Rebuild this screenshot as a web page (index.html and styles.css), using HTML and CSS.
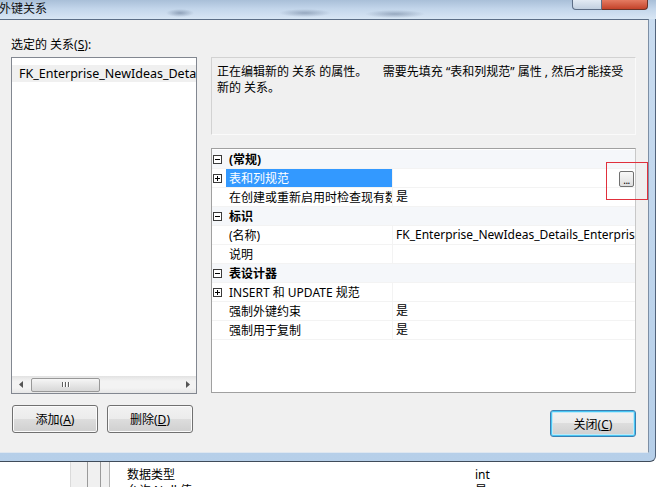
FILE: index.html
```html
<!DOCTYPE html>
<html lang="zh-CN">
<head>
<meta charset="utf-8">
<title>外键关系</title>
<link rel="stylesheet" href="styles.css">
</head>
<body>
<div class="screen">
  <div class="window">
    <div class="titlebar">
      <span class="title">外键关系</span>
      <div class="caption-btns">
        <div class="cap-restore"></div>
        <div class="cap-close"></div>
      </div>
    </div>
    <div class="frame">
      <div class="client">
        <div class="left">
          <div class="label">选定的 关系(<u>S</u>):</div>
          <div class="listbox">
            <div class="list-items">
              <div class="list-item">FK_Enterprise_NewIdeas_Details_Enterprise</div>
            </div>
            <div class="hscroll">
              <div class="arrow"><svg width="4" height="7" viewBox="0 0 4 7"><path d="M4 0 L0 3.5 L4 7 Z" fill="#555"/></svg></div>
              <div class="track">
                <div class="thumb"><span class="grip"></span><span class="grip"></span><span class="grip"></span></div>
              </div>
              <div class="arrow"><svg width="4" height="7" viewBox="0 0 4 7"><path d="M0 0 L4 3.5 L0 7 Z" fill="#555"/></svg></div>
            </div>
          </div>
          <div class="btnrow">
            <button class="btn">添加(<u>A</u>)</button>
            <button class="btn">删除(<u>D</u>)</button>
          </div>
        </div>
        <div class="right">
          <div class="desc"><div class="dline">正在编辑新的 关系 的属性。&nbsp;&nbsp;&nbsp;&nbsp; 需要先填充 “表和列规范” 属性 , 然后才能接受</div><div class="dline">新的 关系。</div></div>
          <div class="grid">
            <div class="row cat"><div class="margin"><span class="pm minus"></span></div><div class="name">(常规)</div></div>
            <div class="row"><div class="margin"><span class="pm plus"></span></div><div class="name selected">表和列规范</div><div class="value"><span class="ellipsis">...</span></div></div>
            <div class="row"><div class="margin"></div><div class="name">在创建或重新启用时检查现有数据</div><div class="value">是</div></div>
            <div class="row cat"><div class="margin"><span class="pm minus"></span></div><div class="name">标识</div></div>
            <div class="row"><div class="margin"></div><div class="name">(名称)</div><div class="value">FK_Enterprise_NewIdeas_Details_Enterprise</div></div>
            <div class="row"><div class="margin"></div><div class="name">说明</div><div class="value"></div></div>
            <div class="row cat"><div class="margin"><span class="pm minus"></span></div><div class="name">表设计器</div></div>
            <div class="row"><div class="margin"><span class="pm plus"></span></div><div class="name">INSERT 和 UPDATE 规范</div><div class="value"></div></div>
            <div class="row"><div class="margin"></div><div class="name">强制外键约束</div><div class="value">是</div></div>
            <div class="row"><div class="margin"></div><div class="name">强制用于复制</div><div class="value">是</div></div>
          </div>
          <div class="closerow">
            <button class="btn focused">关闭(<u>C</u>)</button>
          </div>
          <div class="redbox"></div>
        </div>
      </div>
    </div>
  </div>
  <div class="below">
    <div class="blank"></div>
    <div class="gutter"><span class="gline g1"></span><span class="gline g2"></span></div>
    <div class="bg-table">
      <div class="bg-row"><span class="bg-name">数据类型</span><span class="bg-val">int</span></div>
      <div class="bg-row"><span class="bg-name">允许 Null 值</span><span class="bg-val">是</span></div>
    </div>
  </div>
</div>
</body>
</html>
```
FILE: styles.css
```css
html, body {
  margin: 0;
  padding: 0;
}
body {
  font: 12px "Noto Sans", "Noto Sans CJK SC", sans-serif;
  color: #000;
  background: #fff;
}
.screen {
  width: 659px;
  height: 487px;
  overflow: hidden;
  background: #fff;
}
.window {
  width: 656px;
  display: flex;
  flex-direction: column;
}
.titlebar {
  height: 19px;
  display: flex;
  justify-content: space-between;
  align-items: flex-start;
  background:
    radial-gradient(ellipse 14px 4px at 180px 13px, rgba(70,90,120,0.45), transparent),
    radial-gradient(ellipse 26px 4px at 305px 13px, rgba(70,90,120,0.4), transparent),
    radial-gradient(ellipse 30px 4px at 395px 14px, rgba(70,90,120,0.4), transparent),
    linear-gradient(#a9bfd8, #c2d5ea 45%, #d8e6f4);
}
.title {
  margin-left: -1px;
  line-height: 18px;
  font-size: 12px;
  color: #111;
}
.caption-btns {
  display: flex;
  margin-right: 8px;
}
.cap-restore {
  width: 28px;
  height: 9px;
  border: 1px solid #5d6e86;
  border-top: none;
  border-radius: 0 0 0 4px;
  background: linear-gradient(#e3ebf4, #c2d0e0);
}
.cap-close {
  width: 45px;
  height: 9px;
  border: 1px solid #6a3328;
  border-top: none;
  border-left: none;
  border-radius: 0 0 4px 0;
  background: linear-gradient(#e47b62, #c4432a);
}
.frame {
  background: linear-gradient(#c9dcf0, #b6cfe9);
  padding: 0 6px 8px 0;
  border-right: 1px solid #52647c;
  border-bottom: 1px solid #3f4b5a;
  border-bottom-right-radius: 6px;
}
.client {
  width: 649px;
  height: 434px;
  box-sizing: border-box;
  background: #f0f0f0;
  border-top: 1px solid #5b6e86;
  border-right: 1px solid #7d8fa5;
  border-bottom: 1px solid #dfe7f0;
  display: flex;
  gap: 14px;
  padding: 16px 0 0 11px;
}
.left {
  width: 186px;
  display: flex;
  flex-direction: column;
}
.label {
  height: 15px;
  line-height: 17px;
  margin-bottom: 6px;
  white-space: nowrap;
}
.listbox {
  height: 337px;
  box-sizing: border-box;
  border: 1px solid #828790;
  background: #fff;
  display: flex;
  flex-direction: column;
}
.list-items {
  flex: 1;
  padding-top: 7px;
  overflow: hidden;
}
.list-item {
  height: 17px;
  line-height: 17px;
  background: #f0f0f0;
  padding-left: 7px;
  font-size: 12.5px;
  white-space: nowrap;
  overflow: hidden;
}
.hscroll {
  height: 17px;
  display: flex;
  align-items: stretch;
  background: linear-gradient(#e2e2e2, #f3f3f3 30%, #f3f3f3 70%, #e6e6e6);
}
.arrow {
  width: 17px;
  display: flex;
  align-items: center;
  justify-content: center;
}
.track {
  flex: 1;
  display: flex;
  align-items: center;
  padding-left: 2px;
}
.thumb {
  width: 69px;
  height: 14px;
  box-sizing: border-box;
  border: 1px solid #989898;
  border-radius: 2px;
  background: linear-gradient(#f6f6f6, #e6e6e6 50%, #d8d8d8);
  display: flex;
  align-items: center;
  justify-content: center;
  gap: 1px;
}
.grip {
  width: 1px;
  height: 5px;
  background: #5f5f5f;
  border-right: 1px solid #fff;
}
.btnrow {
  margin-top: 11px;
  padding-left: 1px;
  display: flex;
  gap: 9px;
}
.btn {
  width: 86px;
  height: 28px;
  box-sizing: border-box;
  font: 12px "Noto Sans", "Noto Sans CJK SC", sans-serif;
  color: #000;
  border: 1px solid #707070;
  border-radius: 3px;
  background: linear-gradient(#f2f2f2, #ebebeb 50%, #dddddd 50%, #cfcfcf);
  box-shadow: inset 0 0 0 1px #fbfbfb;
  padding: 0;
}
.btn.focused {
  height: 27px;
  border-color: #3c7fb1;
  box-shadow: inset 0 0 0 1px #48c6f4, inset 0 0 0 2px #bde9f8;
}
.right {
  width: 425px;
  position: relative;
  padding-top: 21px;
  display: flex;
  flex-direction: column;
}
.desc {
  height: 78px;
  box-sizing: border-box;
  border: 1px solid #d2d2d2;
  border-right-color: #fafafa;
  border-bottom-color: #fafafa;
  padding: 6px 5px 0;
  overflow: hidden;
}
.dline {
  height: 16px;
  line-height: 16px;
  white-space: nowrap;
}
.grid {
  margin-top: 13px;
  height: 245px;
  box-sizing: border-box;
  border: 1px solid #a0a0a0;
  border-right-color: #c8c8c8;
  background: #fff;
  padding-top: 1px;
}
.row {
  height: 19px;
  display: flex;
  box-sizing: border-box;
  border-bottom: 1px solid #f3f3f3;
}
.row.cat {
  background: #f5f7fa;
}
.margin {
  width: 14px;
  flex: none;
  display: flex;
  align-items: center;
}
.pm {
  width: 9px;
  height: 9px;
  box-sizing: border-box;
  border: 1px solid #3a3a3a;
  margin-left: 1px;
  margin-top: 1px;
  position: relative;
  background: #fff;
}
.pm::before {
  content: "";
  position: absolute;
  left: 1px;
  top: 3px;
  width: 5px;
  height: 1px;
  background: #000;
}
.pm.plus::after {
  content: "";
  position: absolute;
  left: 3px;
  top: 1px;
  width: 1px;
  height: 5px;
  background: #000;
}
.name {
  width: 167px;
  flex: none;
  box-sizing: border-box;
  padding-left: 3px;
  line-height: 20px;
  white-space: nowrap;
  overflow: hidden;
  border-right: 1px solid #f3f3f3;
}
.cat .name {
  width: auto;
  flex: 1;
  font-weight: bold;
  border-right: none;
}
.name.selected {
  background: #3399ff;
  color: #fff;
}
.value {
  flex: 1;
  padding-left: 3px;
  line-height: 20px;
  white-space: nowrap;
  overflow: hidden;
  display: flex;
  justify-content: flex-start;
  align-items: center;
}
.ellipsis {
  margin-left: auto;
  margin-right: 1px;
  margin-top: 2px;
  width: 15px;
  height: 16px;
  box-sizing: border-box;
  border: 1px solid #707070;
  border-radius: 2px;
  background: linear-gradient(#f8f8f8, #dedede);
  font-size: 10px;
  line-height: 16px;
  text-align: center;
  letter-spacing: -0.5px;
  color: #000;
}
.closerow {
  margin-top: 17px;
  display: flex;
  justify-content: flex-end;
}
.redbox {
  position: absolute;
  left: 395px;
  top: 126px;
  width: 42px;
  height: 38px;
  box-sizing: border-box;
  border: 1px solid #e0303c;
}
.below {
  height: 25px;
  display: flex;
}
.blank {
  width: 70px;
  flex: none;
}
.gutter {
  width: 40px;
  flex: none;
  box-sizing: border-box;
  background: #f0f0f0;
  border-left: 1px solid #dadada;
  border-right: 1px solid #b5b5b5;
  display: flex;
  gap: 12px;
  padding-left: 16px;
}
.gline {
  width: 1px;
  background: #9a9a9a;
}
.bg-table {
  flex: 1;
  padding-top: 5px;
  padding-left: 17px;
}
.bg-row {
  height: 16px;
  line-height: 16px;
  display: flex;
}
.bg-name {
  width: 348px;
  flex: none;
}
.bg-val {
  flex: 1;
}
```
